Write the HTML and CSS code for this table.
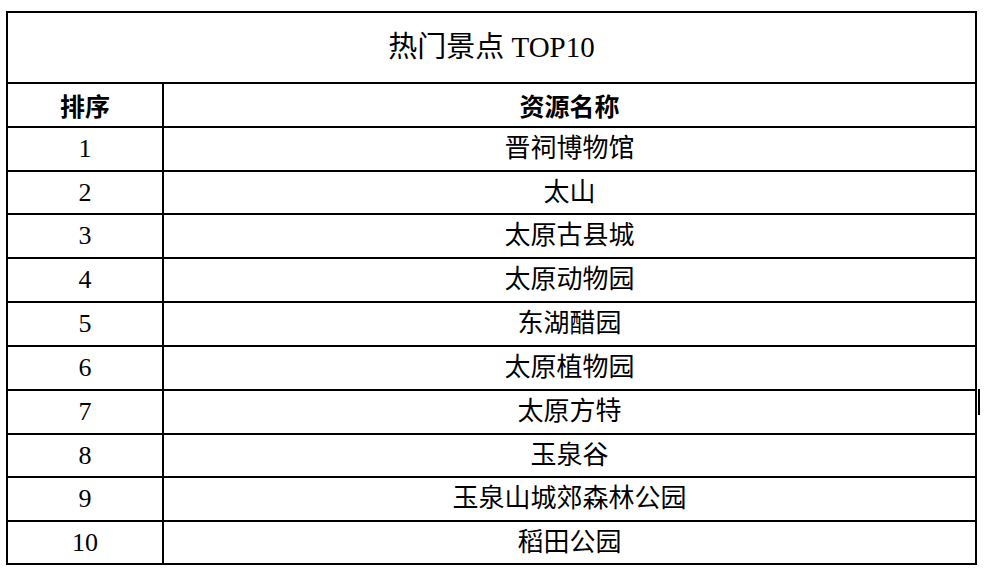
FILE: index.html
```html
<!DOCTYPE html>
<html lang="zh-CN">
<head>
<meta charset="utf-8">
<title>热门景点 TOP10</title>
<link rel="stylesheet" href="styles.css">
</head>
<body>
<div class="sheet">
  <div class="cell title">热门景点 TOP10</div>
  <div class="cell head">排序</div>
  <div class="cell head">资源名称</div>
  <div class="cell num">1</div><div class="cell name">晋祠博物馆</div>
  <div class="cell num">2</div><div class="cell name">太山</div>
  <div class="cell num">3</div><div class="cell name">太原古县城</div>
  <div class="cell num">4</div><div class="cell name">太原动物园</div>
  <div class="cell num">5</div><div class="cell name">东湖醋园</div>
  <div class="cell num">6</div><div class="cell name">太原植物园</div>
  <div class="cell num">7</div><div class="cell name">太原方特</div>
  <div class="cell num">8</div><div class="cell name">玉泉谷</div>
  <div class="cell num">9</div><div class="cell name">玉泉山城郊森林公园</div>
  <div class="cell num">10</div><div class="cell name">稻田公园</div>
  <div class="caret"></div>
</div>
</body>
</html>
```
FILE: styles.css
```css
html, body {
  margin: 0;
  padding: 0;
  background: #ffffff;
}
body {
  padding: 11px 0 0 6px;
  font-family: "Liberation Serif", "Noto Sans CJK SC", serif;
  color: #000000;
}
.sheet {
  position: relative;
  width: 967px;
  display: grid;
  grid-template-columns: 154px 811px;
  grid-template-rows: 69px 42px 42px 41px 42px 42px 42px 42px 42px 41px 42px 41px;
  gap: 2px;
  padding: 2px;
  background: #000000;
}
.cell {
  background: #ffffff;
  display: flex;
  align-items: center;
  justify-content: center;
  font-size: 26px;
  line-height: 1;
  white-space: nowrap;
}
.title {
  grid-column: 1 / 3;
  font-size: 29px;
}
.head {
  font-family: "Noto Sans CJK SC", sans-serif;
  font-weight: 700;
  font-size: 25px;
}
.num {
  font-size: 26px;
}
.name {
  font-size: 26px;
}
.caret {
  position: absolute;
  left: 972px;
  top: 378px;
  width: 2px;
  height: 26px;
  background: #000000;
}
```
